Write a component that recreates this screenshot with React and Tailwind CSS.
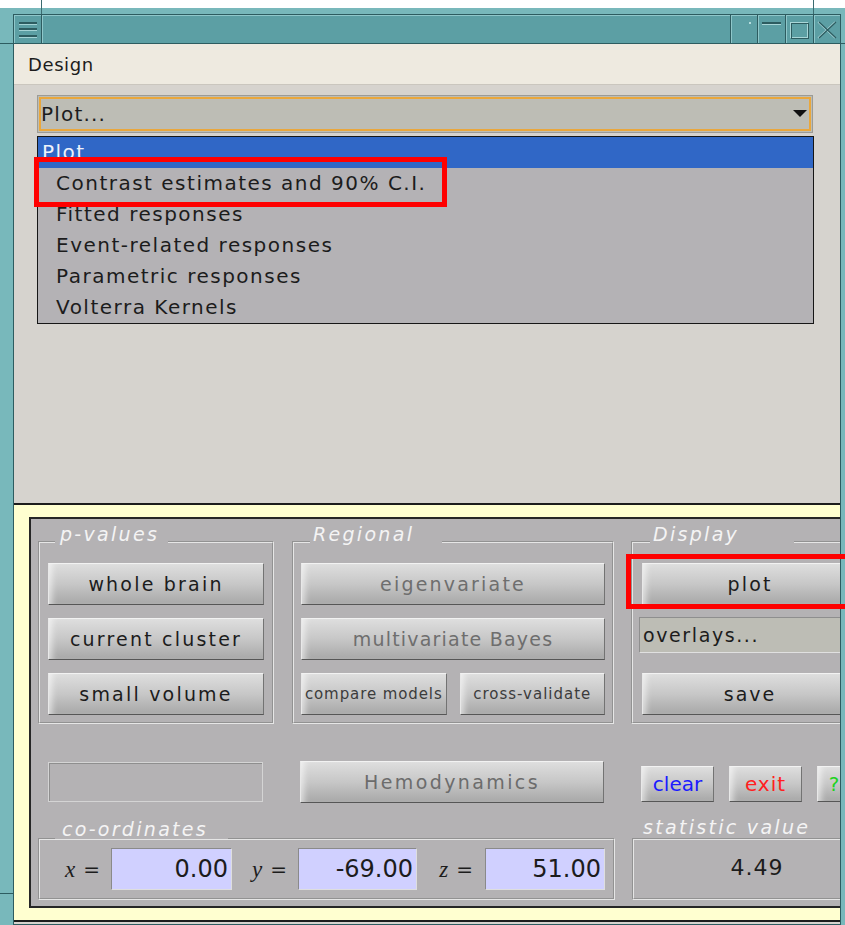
import React from "react";

// Raised bevelled push button used throughout the results panel
const Button = ({ children, className = "" }) => (
  <div
    className={
      "flex shrink-0 items-center justify-center whitespace-nowrap border border-t-[#f2f2f2] border-l-[#e8e8e8] border-r-[#737373] border-b-[#565656] bg-linear-to-b from-[#dedede] via-[#c7c7c7] to-[#a8a8a8] shadow-[inset_7px_0_6px_-4px_rgba(255,255,255,0.6)] " +
      className
    }
  >
    {children}
  </div>
);

// Etched group frame with an italic caption sitting on its top edge
const Group = ({ label, labelClass, className = "", children }) => (
  <div className={"relative shrink-0 border-2 [border-style:groove] border-[#e6e6e6] " + className}>
    <span
      className={
        "absolute h-[20px] whitespace-nowrap bg-[#b4b2b4] text-[19px] italic leading-[20px] tracking-[2.3px] text-[#f4f4f4] " +
        labelClass
      }
    >
      {label}
    </span>
    {children}
  </div>
);

const CoordLabel = ({ v, className }) => (
  <div className={"flex shrink-0 items-center justify-end " + className}>
    <span className="font-['Liberation_Serif',serif] text-[23px] italic leading-none">{v}</span>
    <span className="ml-[8px] text-[20px] leading-none">=</span>
  </div>
);

const CoordInput = ({ value, className }) => (
  <div
    className={
      "flex h-[42px] shrink-0 items-center justify-end border border-[#8a8a8a] border-b-[#dedede] border-r-[#dedede] bg-[#d0d0ff] pr-[3px] text-[24px] " +
      className
    }
  >
    {value}
  </div>
);

const TitleButton = ({ className, children }) => (
  <div
    className={
      "relative shrink-0 border-l border-[#2d5c60] shadow-[inset_1px_1px_0_#8fc7ca] " + className
    }
  >
    {children}
  </div>
);

export default function App() {
  const plotItems = [
    "Contrast estimates and 90% C.I.",
    "Fitted responses",
    "Event-related responses",
    "Parametric responses",
    "Volterra Kernels",
  ];

  return (
    <div className="relative h-[925px] w-[845px] overflow-hidden bg-white font-['DejaVu_Sans',sans-serif] text-[#1c1c1c]">
      <div className="h-[8px]" />
      {/* window frame */}
      <div className="flex h-[917px] flex-col bg-[#78b8bb] pt-[6px] pl-[13px] pr-[4px]">
        <div className="flex min-h-0 flex-1 flex-col overflow-hidden border border-[#2d5c60] bg-[#d6d3ce]">
          {/* title bar */}
          <div className="flex h-[29px] shrink-0 border-b border-[#2d5c60] bg-[#5c9fa4]">
            <div className="flex w-[28px] shrink-0 items-center justify-center border-r border-[#2d5c60] shadow-[inset_1px_1px_0_#8fc7ca]">
              <svg width="18" height="17" viewBox="0 0 18 17">
                <rect x="0" y="1" width="18" height="2" fill="#2d5c60" />
                <rect x="0" y="3" width="18" height="1" fill="#a4d3d5" />
                <rect x="0" y="7" width="18" height="2" fill="#2d5c60" />
                <rect x="0" y="9" width="18" height="1" fill="#a4d3d5" />
                <rect x="0" y="14" width="18" height="2" fill="#2d5c60" />
                <rect x="0" y="16" width="18" height="1" fill="#a4d3d5" />
              </svg>
            </div>
            <div className="flex-1 shadow-[inset_1px_1px_0_#8fc7ca]" />
            <TitleButton className="w-[27px]">
              <svg width="26" height="28" className="absolute left-0 top-0">
                <rect x="18" y="7" width="2" height="2" fill="#b4dcdd" />
              </svg>
            </TitleButton>
            <TitleButton className="w-[28px]">
              <svg width="27" height="28" className="absolute left-0 top-0">
                <rect x="4" y="7" width="19" height="2" fill="#2d5c60" />
                <rect x="4" y="9" width="19" height="1" fill="#a9d6d8" />
              </svg>
            </TitleButton>
            <TitleButton className="w-[28px]">
              <svg width="27" height="28" className="absolute left-0 top-0">
                <rect x="4.5" y="7.5" width="17" height="15" fill="none" stroke="#a9d6d8" />
                <rect x="5.5" y="8.5" width="17" height="15" fill="none" stroke="#2d5c60" />
              </svg>
            </TitleButton>
            <TitleButton className="w-[27px]">
              <svg width="26" height="28" className="absolute left-0 top-0">
                <path d="M4 7 L21 23 M21 7 L4 23" stroke="#a9d6d8" strokeWidth="1.2" />
                <path d="M5 7 L22 23 M22 7 L5 23" stroke="#2d5c60" strokeWidth="1.2" />
              </svg>
            </TitleButton>
          </div>

          {/* menu bar */}
          <div className="flex h-[41px] shrink-0 items-center border-b border-[#cac6be] bg-[#eeeae0] pl-[14px] text-[18px] tracking-[0.6px]">
            Design
          </div>

          {/* figure body with open popup menu */}
          <div className="h-[418px] shrink-0 pl-[23px] pt-[10px]">
            <div className="flex h-[38px] w-[776px] border border-[#9c9b96] bg-[#bdbdb5] p-px">
              <div className="flex flex-1 items-center justify-between border-2 border-[#eaa73c] pr-[2px]">
                <span className="text-[20px] tracking-[1.2px]">Plot...</span>
                <svg width="14" height="8" viewBox="0 0 14 8">
                  <polygon points="0,0 14,0 7,7" fill="#111" />
                </svg>
              </div>
            </div>
            <div className="mt-[3px] w-[777px] border border-[#161616] bg-[#b4b2b5] text-[20px] leading-[31px] tracking-[1.5px]">
              <div className="h-[31px] bg-[#3067c6] pl-[4px] text-[#eef2fa]">Plot</div>
              {plotItems.map((t) => (
                <div key={t} className="h-[31px] whitespace-nowrap pl-[18px]">
                  {t}
                </div>
              ))}
            </div>
          </div>

          {/* results panel inside its yellow surround */}
          <div className="w-[930px] shrink-0 border-y-2 border-[#1c1c1c] bg-[#ffffd0] py-[12px] pl-[15px]">
            <div className="h-[391px] border-2 border-[#262626] bg-[#b4b2b4] pl-[7px] pt-[22px]">
              {/* group row */}
              <div className="flex">
                <Group
                  label="p-values"
                  labelClass="left-[15px] -top-[19px] w-[113px] pl-[5px]"
                  className="flex w-[236px] flex-col gap-[13px] px-[8px] pb-[7px] pt-[20px]"
                >
                  <Button className="h-[42px] text-[19px] tracking-[2.2px]">whole brain</Button>
                  <Button className="h-[42px] text-[19px] tracking-[2.2px]">current cluster</Button>
                  <Button className="h-[42px] text-[19px] tracking-[2.2px]">small volume</Button>
                </Group>
                <Group
                  label="Regional"
                  labelClass="left-[16px] -top-[19px] w-[132px] pl-[3px]"
                  className="ml-[18px] flex w-[322px] flex-col gap-[13px] px-[7px] pb-[7px] pt-[20px]"
                >
                  <Button className="h-[42px] text-[19px] tracking-[2.2px] text-[#6e6e6e]">eigenvariate</Button>
                  <Button className="h-[42px] text-[19px] tracking-[1.2px] text-[#6e6e6e]">multivariate Bayes</Button>
                  <div className="grid grid-cols-2 gap-[13px]">
                    <Button className="h-[42px] text-[15px] tracking-[0.9px] text-[#3c3c3c]">compare models</Button>
                    <Button className="h-[42px] text-[15px] tracking-[1px] text-[#3c3c3c]">cross-validate</Button>
                  </div>
                </Group>
                <Group
                  label="Display"
                  labelClass="left-[17px] -top-[19px] w-[144px] pl-[3px]"
                  className="ml-[17px] flex w-[240px] flex-col pb-[7px] pl-[9px] pt-[20px]"
                >
                  <Button className="h-[42px] w-[216px] text-[19px] tracking-[2.2px]">plot</Button>
                  <div className="-ml-[3px] mt-[12px] flex h-[36px] w-[222px] items-center justify-between border border-[#8e8e8e] border-b-[#e0e0e0] border-r-[#e0e0e0] bg-[#bdbdb5] pl-[3px] pr-[4px] text-[19px] tracking-[1.6px]">
                    <span>overlays...</span>
                    <svg width="12" height="7" viewBox="0 0 12 7">
                      <polygon points="0,0 12,0 6,6" fill="#111" />
                    </svg>
                  </div>
                  <Button className="mt-[20px] h-[42px] w-[216px] text-[19px] tracking-[2px]">save</Button>
                </Group>
              </div>

              {/* action row */}
              <div className="mt-[37px] flex h-[42px] items-end">
                <div className="w-[236px] shrink-0 pb-[1px] pl-[10px]">
                  <div className="h-[40px] w-[215px] border border-[#d4d4d4] shadow-[inset_1px_1px_0_#8e8e8e]" />
                </div>
                <div className="ml-[18px] w-[322px] shrink-0 pl-[8px]">
                  <Button className="h-[42px] w-[304px] text-[19px] tracking-[2.4px] text-[#6c6c6c]">Hemodynamics</Button>
                </div>
                <div className="ml-[17px] flex shrink-0 gap-[15px] pb-[1px] pl-[10px] text-[20px]">
                  <Button className="h-[36px] w-[73px] text-[#1a1aff]">clear</Button>
                  <Button className="h-[36px] w-[73px] tracking-[1px] text-[#ff2020]">exit</Button>
                  <Button className="h-[36px] w-[34px] text-[#1ed31e]">?</Button>
                </div>
              </div>

              {/* co-ordinates and statistic row */}
              <div className="mt-[35px] flex">
                <Group
                  label="co-ordinates"
                  labelClass="left-[15px] -top-[21px] w-[173px] pl-[7px]"
                  className="flex w-[577px] items-center py-[8px]"
                >
                  <CoordLabel v="x" className="w-[60px]" />
                  <CoordInput value="0.00" className="ml-[11px] w-[121px]" />
                  <CoordLabel v="y" className="w-[55px]" />
                  <CoordInput value="-69.00" className="ml-[11px] w-[119px]" />
                  <CoordLabel v="z" className="w-[56px]" />
                  <CoordInput value="51.00" className="ml-[12px] w-[120px]" />
                </Group>
                <Group
                  label="statistic value"
                  labelClass="left-[4px] -top-[23px] w-[189px] pl-[5px]"
                  className="ml-[17px] flex h-[62px] w-[240px] items-center justify-center pb-[4px]"
                >
                  <span className="pl-[10px] text-[22px] tracking-[1px]">4.49</span>
                </Group>
              </div>
            </div>
          </div>
        </div>
      </div>

      {/* frame corner marks */}
      <div className="absolute left-[41px] top-0 h-[14px] w-px bg-[#3b6c70]" />
      <div className="absolute left-[813px] top-0 h-[14px] w-px bg-[#3b6c70]" />
      <div className="absolute left-0 top-[43px] h-px w-[13px] bg-[#2d5c60]" />
      <div className="absolute left-[841px] top-[43px] h-px w-[4px] bg-[#2d5c60]" />
      <div className="absolute left-0 top-[893px] h-px w-[13px] bg-[#2d5c60]" />

      {/* red highlight rectangles */}
      <div className="absolute left-[34px] top-[157px] h-[50px] w-[413px] border-[5px] border-[#ff0000]" />
      <div className="absolute left-[626px] top-[554px] h-[55px] w-[240px] border-[5px] border-[#ff0000]" />
    </div>
  );
}
